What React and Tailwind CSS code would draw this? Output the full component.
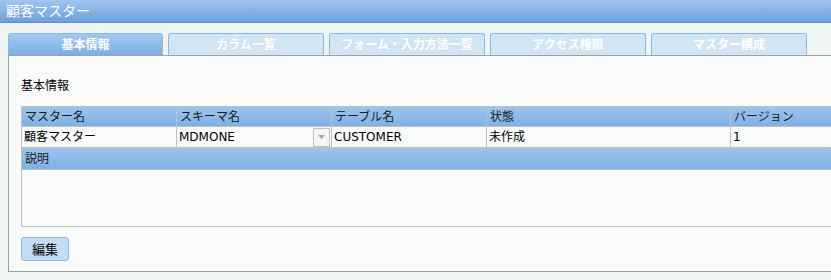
import React from "react";

const font = { fontFamily: '"DejaVu Sans", "Noto Sans CJK JP", sans-serif' };

const tabs = ["基本情報", "カラム一覧", "フォーム・入力方法一覧", "アクセス権限", "マスター構成"];

const columns = [
  { label: "マスター名", value: "顧客マスター", w: "w-[155px]" },
  { label: "スキーマ名", value: "MDMONE", w: "w-[155px]", select: true },
  { label: "テーブル名", value: "CUSTOMER", w: "w-[155px]" },
  { label: "状態", value: "未作成", w: "w-[244px]" },
  { label: "バージョン", value: "1", w: "flex-1" },
];

const App = () => {
  return (
    <div
      className="w-[831px] h-[280px] overflow-hidden bg-[#eef4f2] text-[12px] text-black"
      style={font}
    >
      <div className="h-[23px] bg-gradient-to-b from-[#a2c6ee] to-[#6c9fdc] border-b border-[#5f8fc8] flex items-center pl-[6px]">
        <span className="text-white text-[14px] leading-none">顧客マスター</span>
      </div>

      <div className="flex gap-[5px] pl-[8px] mt-[10px] h-[22px]">
        {tabs.map((t, i) => (
          <div
            key={t}
            className={
              i === 0
                ? "w-[155px] h-[22px] rounded-t-[3px] border border-b-0 border-[#8ab8ea] bg-gradient-to-b from-[#a4c8ef] to-[#7bb0e7] flex items-center justify-center text-white font-bold"
                : "w-[156px] h-[22px] rounded-t-[3px] border border-b-0 border-[#8ab8ea] bg-[#d2e5f4] flex items-center justify-center text-white font-bold"
            }
          >
            {t}
          </div>
        ))}
      </div>

      <div className="ml-[8px] w-[840px] h-[217px] border border-[#a0a0a0] bg-[#f9fbfb] pl-[12px]">
        <div className="mt-[22px] h-[16px] leading-[16px]">基本情報</div>

        <div className="mt-[12px] border-l border-t border-[#c0c0c0] w-[830px]">
          <div className="flex h-[20px] bg-gradient-to-b from-[#9cc4ee] to-[#7eb1e5] border-b border-[#c0c0c0]">
            {columns.map((c) => (
              <div
                key={c.label}
                className={`${c.w} border-r border-[#c0c0c0] pl-[3px] leading-[20px] text-[#1a1a1a]`}
              >
                {c.label}
              </div>
            ))}
          </div>
          <div className="flex h-[21px] bg-[#f9fbfb] border-b border-[#c0c0c0]">
            {columns.map((c) => (
              <div
                key={c.label}
                className={`${c.w} border-r border-[#c0c0c0] pl-[2px] flex items-center justify-between`}
              >
                <span>{c.value}</span>
                {c.select && (
                  <div className="w-[17px] h-[19px] border border-[#c0c0c0] bg-[#f4f6f6] flex items-center justify-center mr-[1px]">
                    <svg width="7" height="4" viewBox="0 0 7 4">
                      <path d="M0 0h7L3.5 4z" fill="#a8a8a8" />
                    </svg>
                  </div>
                )}
              </div>
            ))}
          </div>
          <div className="h-[22px] bg-gradient-to-b from-[#9cc4ee] to-[#7eb1e5] border-b border-[#c0c0c0] pl-[3px] leading-[22px] text-[#1a1a1a]">
            説明
          </div>
          <div className="h-[57px] border-b border-[#c0c0c0] bg-[#f9fbfb]" />
        </div>

        <button className="mt-[10px] w-[48px] h-[24px] rounded-[3px] border border-[#8ab8ea] bg-[#c6dcf4] text-[13px] leading-none">
          編集
        </button>
      </div>
    </div>
  );
};

export default App;
